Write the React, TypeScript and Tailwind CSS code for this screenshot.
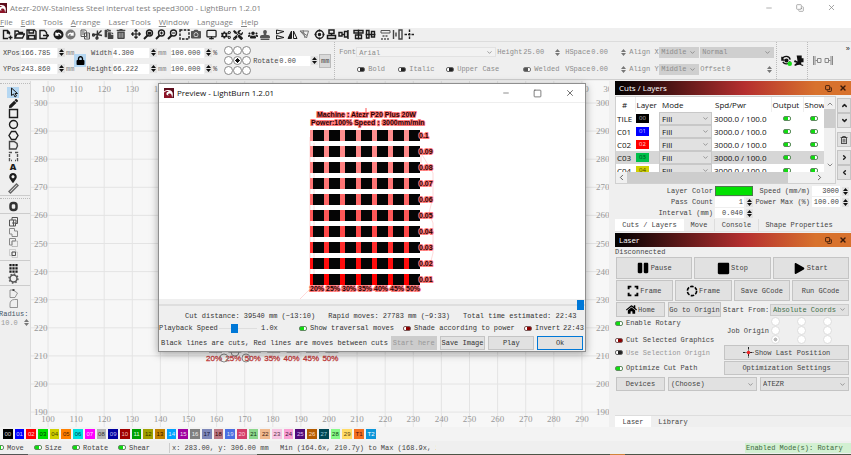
import type { ReactNode } from "react";
import { ChevronDown, ChevronLeft, ChevronRight, ChevronUp, Copy, Monitor, Minus, Square, X } from "lucide-react";
import {
  FaArrowsAlt, FaCamera, FaCogs, FaHome, FaLock, FaMapMarkerAlt, FaPaste, FaPause,
  FaPen, FaPlay, FaRegTrashAlt, FaStamp, FaStop, FaTools, FaTrashAlt, FaUsers,
} from "react-icons/fa";

const mono = "font-['Liberation_Mono',monospace] text-[7px] leading-[10px]";
const sans = "font-['Open_Sans',sans-serif]";

function Ico({ children, className = "size-[11px] text-[#1c1c1c]" }: { children: ReactNode; className?: string }) {
  return (
    <svg viewBox="0 0 22 22" className={`shrink-0 ${className}`} fill="none" stroke="currentColor" strokeWidth="2.8">
      {children}
    </svg>
  );
}

function Logo() {
  return (
    <svg viewBox="0 0 20 20" className="size-[10px] shrink-0">
      <rect width="20" height="20" fill="#8d1427" />
      <path d="M20 0v20h-5c2-5 1-9-3-9-3 0-4 3-2 5-4 0-6-3-5-6 1-4 7-6 12-2-3-5-10-6-17-3V0z" fill="#5b0d1c" />
      <path d="M0 7C6 3 14 3 17 9c1 3 1 7-1 11 0-5-1-9-5-9-3 0-4 3-1 4-4 1-6-2-5-5 1-2 3-3 6-3-4-2-8-1-11 2z" fill="#fff" />
    </svg>
  );
}

function Spin({ muted = false }: { muted?: boolean }) {
  return (
    <button aria-label="Step value" className={muted ? "shrink-0 text-[#777]" : "shrink-0 bg-[#e2e2e2] text-[#111]"}>
      <svg viewBox="0 0 7 9" className="block h-[9px] w-[7px]" fill="currentColor">
        <path d="M1 4 3.500 1 6 4zM1 5h5L3.500 8z" />
      </svg>
    </button>
  );
}

function Field({ label, value, labelClass = "", inputClass }: { label: string; value: string; labelClass?: string; inputClass: string }) {
  return (
    <label className="flex shrink-0 items-center">
      <span className={`whitespace-pre ${labelClass}`}>{label}</span>
      <input aria-label={label || "Scale"} defaultValue={value} className={`h-[10px] min-w-0 ${inputClass}`} />
    </label>
  );
}

const toggleStyles = {
  on: "border-[#5f8a5f] bg-[linear-gradient(90deg,#10dc10_60%,#ffffff_60%)]",
  off: "border-[#7a5a5a] bg-[linear-gradient(90deg,#ffffff_40%,#8d0000_40%)]",
  muted: "border-[#666] bg-[linear-gradient(90deg,#ffffff_40%,#222222_40%)]",
  mutedOn: "border-[#777] bg-[linear-gradient(90deg,#555555_60%,#ffffff_60%)]",
};

function Toggle({ label, kind = "on", className = "", hideLabel = false }: { label: string; kind?: keyof typeof toggleStyles; className?: string; hideLabel?: boolean }) {
  return (
    <label className={`flex shrink-0 items-center gap-[3px] whitespace-pre ${className}`}>
      <input
        type="checkbox"
        aria-label={label}
        defaultChecked={kind === "on" || kind === "mutedOn"}
        className={`h-[5px] w-2 shrink-0 appearance-none rounded-[2px] border ${toggleStyles[kind]}`}
      />
      {!hideLabel && label}
    </label>
  );
}

function Pick({ label, value, className = "", selectClass = "" }: { label: string; value: string; className?: string; selectClass?: string }) {
  return (
    <div className={`relative ${className}`}>
      <select aria-label={label} className={`block size-full appearance-none pl-[2px] ${selectClass}`}>
        <option>{value}</option>
      </select>
      <ChevronDown className="pointer-events-none absolute inset-y-0 right-[3px] my-auto size-[7px] text-[#666]" />
    </div>
  );
}

function PushButton({ children, className = "" }: { children: ReactNode; className?: string }) {
  return (
    <button className={`flex items-center justify-center whitespace-nowrap border border-[#c4c4c4] bg-[#e1e1e1] ${className}`}>
      {children}
    </button>
  );
}

function TitleBar() {
  return (
    <header className={`flex h-[15px] items-center bg-white text-[8px] text-[#808080] ${sans}`}>
      <div className="-ml-[3px]"><Logo /></div>
      <h1 className="ml-[3px] whitespace-nowrap">Atezr-20W-Stainless Steel interval test speed3000 - LightBurn 1.2.01</h1>
      <div className="ml-auto flex items-center gap-[23px] pr-[15px] text-[#888]">
        <button aria-label="Minimize"><Minus className="size-2" /></button>
        <button aria-label="Restore"><Copy className="size-2 -scale-x-100 rotate-90" /></button>
        <button aria-label="Close"><X className="size-[9px]" /></button>
      </div>
    </header>
  );
}

const menus = ["File", "Edit", "Tools", "Arrange", "Laser Tools", "Window", "Language", "Help"];

function MenuBar() {
  return (
    <nav className={`flex h-[13px] items-center gap-2 bg-white text-[8px] text-[#808080] ${sans}`}>
      {menus.map((m) => (
        <button key={m} className="whitespace-nowrap">
          {["Tools", "Laser Tools", "Language"].includes(m) ? m : <><u>{m[0]}</u>{m.slice(1)}</>}
        </button>
      ))}
    </nav>
  );
}

const fa = "size-[10px] shrink-0";

const toolGroups: ReactNode[][] = [
  [
    <Ico><path d="M12 19H3V3h8l4 4v4M11 3v5h4M17 13v8M13 17h8" /></Ico>,
    <Ico><path d="M2 18V4h6l2 3h7v3M2 18l4-8h15l-4 8z" /></Ico>,
    <Ico><path d="M2 2h15l3 3v15H2zM6 2v6h9V2M5 20v-7h12v7" /></Ico>,
    <Ico><path d="M17 10V7l-4-4H4v16h13v-2M10 13h10M17 10l4 3-4 4" /></Ico>,
  ],
  [
    <Ico><circle cx="11" cy="11" r="10" fill="currentColor" stroke="none" /><path d="M6 7v5h5M7 11c3-4 8-3 9 2" stroke="#fff" /></Ico>,
    <Ico className="size-[11px] text-[#777]"><circle cx="11" cy="11" r="10" fill="currentColor" stroke="none" /><path d="M16 7v5h-5M15 11c-3-4-8-3-9 2" stroke="#fff" /></Ico>,
  ],
  [
    <Ico className="size-[11px] text-[#555]"><path d="M2 2h9l2 3v10H2zM9 8h10v12H9zM4 6h5M4 10h4M12 12h5M12 16h5" strokeWidth="2" /></Ico>,
    <Ico className="size-[11px] text-[#333]"><path d="M1 11h10l8-8M11 11l9 2M11 3l-1 16" /><circle cx="10" cy="18" r="2" /><circle cx="3" cy="12" r="2" /></Ico>,
    <FaPaste className={`${fa} text-[#444]`} />,
    <FaTrashAlt className={`${fa} text-[#444]`} />,
  ],
  [
    <FaArrowsAlt className={fa} />,
    <Ico><circle cx="13" cy="8" r="6" /><path d="m9 13-7 7" strokeWidth="4" /><path d="M10 6h6v5h-6z" fill="currentColor" strokeWidth="1" /></Ico>,
    <Ico><circle cx="13" cy="8" r="6" /><path d="m9 13-7 7" strokeWidth="4" /><path d="M10 8h6M13 5v6" strokeWidth="2" /></Ico>,
    <Ico><circle cx="13" cy="8" r="6" /><path d="m9 13-7 7" strokeWidth="4" /><path d="M10 8h6" strokeWidth="2" /></Ico>,
    <Ico><path d="M2 2h18v18H2z" strokeDasharray="5 2.500" /></Ico>,
    <FaCamera className={`${fa} text-[#555]`} />,
  ],
  [<Monitor className="size-[11px] shrink-0" strokeWidth={2.600} />],
  [<FaCogs className={fa} />, <FaTools className={fa} />],
  [
    <FaUsers className={fa} />,
    <FaStamp className={`${fa} text-[#555]`} />,
  ],
  [
    <Ico><path d="M3 2v8l15-5zM3 20v-7l15 4z" strokeWidth="2" /></Ico>,
    <Ico><path d="M9 4v15H2z" fill="currentColor" strokeWidth="2" /><path d="M13 4v15h7z" strokeWidth="2" /></Ico>,
    <Ico className="size-[11px] text-[#777]"><path d="M2 4h17l-4 14zM2 4l14 9M8 2l4 16" strokeWidth="2" /></Ico>,
  ],
  [
    <Ico><circle cx="11" cy="11" r="8" /><circle cx="11" cy="11" r="2" fill="currentColor" /><path d="M11 1v4M11 17v4M1 11h4M17 11h4" /></Ico>,
    <Ico><path d="M6 2h10v7H6zM11 9v5M3 13h16v6H3z" strokeWidth="3" /></Ico>,
    <Ico><path d="M2 7h6v7H2zM8 11h5M13 5h6v11h-6zM20 2v18" /></Ico>,
  ],
  [
    <Ico><path d="M2 3h18v5H2zM5 12h12v7H5zM11 1v20" /></Ico>,
    <Ico><path d="M3 3h5v15H3zM13 5h6v11h-6zM1 11h20" /></Ico>,
  ],
  [
    <Ico className="size-[11px] text-[#555]"><path d="M2 3h18v5H2z" strokeWidth="2" /><path d="M5 14h12M2 20h18" strokeDasharray="4 2" /></Ico>,
    <Ico className="size-[11px] text-[#444]"><path d="M3 2v18M8 7v8M14 2h6v18h-6z" /></Ico>,
    <Ico className="size-[11px] text-[#222]"><path d="M11 1v20M1 11h20" strokeDasharray="5 2" /></Ico>,
  ],
];

function Toolbar() {
  return (
    <div className="flex h-[14px] items-center gap-[3px] border-b border-[#dcdcdc] bg-[#efefef] pl-px text-[#1c1c1c]">
      {toolGroups.map((group, i) => (
        <div key={i} className="flex">
          {group.map((icon, j) => (
            <button key={j} aria-label={`Tool ${i + 1}.${j + 1}`} className="flex w-3 justify-center">{icon}</button>
          ))}
        </div>
      ))}
    </div>
  );
}

function Anchor({ name, checked, className = "" }: { name: string; checked: boolean; className?: string }) {
  return (
    <input
      type="radio"
      name={name}
      aria-label={name}
      defaultChecked={checked}
      className={`block size-[9px] appearance-none rounded-full border bg-white ${className}`}
    />
  );
}

const nine = [0, 1, 2, 3, 4, 5, 6, 7, 8];

function PropertiesBar() {
  return (
    <div className={`flex h-[38px] shrink-0 items-center border-b border-[#cfcfcf] bg-[#efefef] text-[#4a4a4a] ${mono}`}>
      <div className="flex shrink-0 flex-col gap-[6px] pl-[3px]">
        <div className="flex items-center gap-px">
          <Field label="XPos" value="166.785" labelClass="w-[18px]" inputClass="w-[36px] bg-white" /><Spin />
          <span className="w-2 text-[#888]">mm</span>
        </div>
        <div className="flex items-center gap-px">
          <Field label="YPos" value="243.860" labelClass="w-[18px]" inputClass="w-[36px] bg-white" /><Spin />
          <span className="w-2 text-[#888]">mm</span>
        </div>
      </div>
      <button aria-label="Lock aspect ratio" className="flex h-[13px] w-[12px] shrink-0 items-center justify-center bg-[#b5d7f2] text-black">
        <FaLock className="size-[9px]" />
      </button>
      <div className="flex shrink-0 flex-col gap-[6px]">
        <div className="flex items-center gap-px">
          <Field label="Width" value="4.300" labelClass="w-[27px] pr-px text-right" inputClass="w-[36px] bg-white" /><Spin />
          <span className="w-3 text-[#888]">mm</span>
          <Field label="" value="100.000" inputClass="w-[33px] bg-white" /><Spin />
          <span>%</span>
        </div>
        <div className="flex items-center gap-px">
          <Field label="Height" value="66.222" labelClass="w-[27px] pr-px text-right" inputClass="w-[36px] bg-white" /><Spin />
          <span className="w-3 text-[#888]">mm</span>
          <Field label="" value="100.000" inputClass="w-[33px] bg-white" /><Spin />
          <span>%</span>
        </div>
      </div>
      <div className="ml-[7px] grid shrink-0 grid-cols-3 gap-y-px">
        {nine.map((n) => (
          <Anchor key={n} name="Anchor point" checked={n === 4} className="border-[#888] checked:bg-[radial-gradient(#111_40%,#fff_45%)]" />
        ))}
      </div>
      <div className="ml-[2px] flex shrink-0 items-center gap-px">
        <Field label="Rotate" value="0.00" labelClass="w-[26px]" inputClass="w-[31px] bg-white" /><Spin />
        <button className="h-[14px] w-[12px] border border-[#bbb] bg-[#d9d9d9]">mm</button>
      </div>
      <div className="ml-[3px] flex h-full shrink-0 flex-col justify-center gap-[6px] border-l border-dotted border-[#bbb] pl-[4px] text-[#8c8c8c]">
        <div className="flex items-center">
          <span className="w-[17px]">Font</span>
          <Pick label="Font" value="Arial" className="h-[10px] w-[140px]" selectClass="border border-[#e2e2e2] bg-[#f2f2f2]" />
          <Field label="Height" value="25.00" labelClass="ml-px w-[26px]" inputClass="w-[31px]" /><Spin muted />
          <Field label="HSpace" value="0.00" labelClass="ml-1 w-[26px]" inputClass="w-[29px]" /><Spin muted />
          <span className="ml-[2px] w-[30px]">Align X</span>
          <Pick label="Align X" value="Middle" className="h-[11px] w-[40px]" selectClass="bg-[#cfcfcf]" />
          <Pick label="Text mode" value="Normal" className="ml-px h-[11px] w-[74px]" selectClass="bg-[#cfcfcf]" />
        </div>
        <div className="flex items-center">
          <Toggle label="Bold" kind="muted" className="ml-[18px] w-[41px]" />
          <Toggle label="Italic" kind="muted" className="w-[48px]" />
          <Toggle label="Upper Case" kind="muted" className="w-[77px]" />
          <Toggle label="Welded" kind="mutedOn" className="w-[42px]" />
          <Field label="VSpace" value="0.00" labelClass="w-[26px]" inputClass="w-[29px]" /><Spin muted />
          <span className="ml-[2px] w-[30px]">Align Y</span>
          <Pick label="Align Y" value="Middle" className="h-[11px] w-[40px]" selectClass="bg-[#cfcfcf]" />
          <Field label="Offset" value="0" labelClass="ml-px w-[26px]" inputClass="w-[40px]" /><Spin muted />
        </div>
      </div>
      <div className="ml-[2px] flex h-full shrink-0 items-center gap-px border-l border-dotted border-[#bbb] pl-[4px]">
        <svg viewBox="0 0 24 24" className="size-[11px]" fill="none" stroke="#111" strokeWidth="3">
          <path d="M3 9c3-8 15-8 17 1M2 4v7h6M20 14c-3 6-12 8-16 1" /><circle cx="12" cy="12" r="3" fill="#111" />
          <circle cx="19" cy="19" r="5" fill="#15e015" stroke="none" />
        </svg>
        <svg viewBox="0 0 24 24" className="size-[11px]" fill="#111">
          <path d="M8 1h11v6h4v9h-5v4l5 2-2 2-6-3-5 1-6 2-1-3 5-4-6-2 2-4 6 3z" />
        </svg>
      </div>
      <div className="ml-[3px] flex h-full shrink-0 items-center border-l border-dotted border-[#bbb] pl-1 text-[#888]">
        <svg viewBox="0 0 44 22" className="h-[11px] w-[22px]" fill="none" stroke="currentColor" strokeWidth="2">
          <path d="M3 2v18M6 2v18M7 11h4M11 7h7v8h-7zM41 2v18M38 2v18M37 11h-3M26 7h7v8h-7z" />
        </svg>
      </div>
      <span className="ml-auto self-start pt-[2px] pr-px text-[#222]">»</span>
    </div>
  );
}

const drawTools: ReactNode[] = [
  <Ico><path d="M7 2v15l4-3 3 6 3-2-3-5h5z" strokeWidth="2" /></Ico>,
  <FaPen className="size-[9px]" />,
  <Ico><path d="M3 3h16v16H3z" /></Ico>,
  <Ico><circle cx="11" cy="11" r="8" /></Ico>,
  <Ico><path d="M7 3h8l5 8-5 8H7l-5-8z" /></Ico>,
  <Ico className="size-[11px] text-[#444]"><path d="M3 3h9l6 4 1 5-3 6H3z" /></Ico>,
  <Ico className="size-[11px] text-[#555]"><path d="M8 3H3v16h5M14 3h5v16h-5" strokeDasharray="6 2" /></Ico>,
  <span className="font-['Open_Sans',sans-serif] text-[9px] leading-[10px] font-extrabold">A</span>,
  <FaMapMarkerAlt className="size-[10px]" />,
  <Ico className="size-[11px] text-[#666]"><path d="M2 17 17 2l3 3L5 20z" /></Ico>,
];

const boolTools: ReactNode[] = [
  <Ico className="size-[11px] text-[#555]"><path d="M8 3h11v12h-4v5H3V8h5zM8 8h8v8M8 14h8M11 8v12" strokeWidth="2" /></Ico>,
  <Ico className="size-[11px] text-[#888]"><path d="M3 3h10v5h6v11H8v-5H3z" strokeWidth="2" /></Ico>,
  <Ico className="size-[11px] text-[#888]"><path d="M3 3h12v5H8v8H3z" strokeWidth="2" /><path d="M8 8h11v11H8z" strokeWidth="1" /></Ico>,
  <Ico className="size-[11px] text-[#aaa]"><path d="M3 3h12v12H3zM8 8h11v11H8z" strokeWidth="1" /><path d="M8 8h7v7H8z" stroke="#555" strokeWidth="2" /></Ico>,
];

function ToolColumn() {
  const cell = "flex min-h-0 w-[12px] flex-1 items-center justify-center";
  return (
    <aside className={`flex w-[31px] shrink-0 flex-col border-r border-[#dcdcdc] bg-[#efefef] text-[#1c1c1c] ${mono}`}>
      <div className="mt-[2px] border-t border-dotted border-[#bbb]" />
      <div className="mt-[3px] flex h-[107px] flex-col pl-[7px]">
        {drawTools.map((t, i) => (
          <button key={i} aria-label={`Draw tool ${i + 1}`} className={i === 0 ? `${cell} bg-[#b5d7f2]` : cell}>{t}</button>
        ))}
      </div>
      <div className="mt-px border-t border-[#ccc]" />
      <div className="mt-[2px] border-t border-dotted border-[#bbb]" />
      <button aria-label="Offset" className="mt-[2px] ml-[7px] flex h-[11px] w-[12px] items-center justify-center">
        <Ico className="size-[11px] text-[#333]"><rect x="5" y="4" width="12" height="14" rx="5" strokeWidth="5" /></Ico>
      </button>
      <div className="mt-px border-t border-[#ccc]" />
      <div className="mt-[2px] flex h-[43px] flex-col pl-[7px]">
        {boolTools.map((t, i) => <button key={i} aria-label={`Boolean ${i + 1}`} className={cell}>{t}</button>)}
      </div>
      <div className="mt-px border-t border-[#ccc]" />
      <div className="mt-[2px] flex h-[21px] flex-col pl-[7px]">
        <button aria-label="Grid array" className={cell}>
          <Ico><path d="M5 2v18M11 2v18M17 2v18" strokeWidth="4.500" strokeDasharray="4.500 2" /></Ico>
        </button>
        <button aria-label="Circular array" className={cell}>
          <Ico className="size-[11px] text-[#555]"><circle cx="11" cy="11" r="7" strokeWidth="3" /><circle cx="11" cy="11" r="9" strokeDasharray="3 4" /></Ico>
        </button>
      </div>
      <div className="mt-px border-t border-[#ccc]" />
      <div className="mt-[2px] flex h-[21px] flex-col pl-[7px]">
        <button aria-label="Start point" className={cell}>
          <Ico className="size-[11px] text-[#777]"><path d="M4 19V4h6l9 6-5 9z" strokeWidth="1.500" /><path d="M9 4h4" strokeWidth="3" stroke="#222" /></Ico>
        </button>
        <button aria-label="Fillet corner" className={cell}>
          <Ico className="size-[11px] text-[#777]"><path d="M4 19V12c0-5 3-9 9-9h6v16z" strokeWidth="1.500" /></Ico>
        </button>
      </div>
      <label htmlFor="radius" className="-ml-px h-[9px] whitespace-nowrap text-[#456]">Radius:</label>
      <div className="flex items-center gap-1 pl-px text-[#999]">
        <input id="radius" defaultValue="10.0" className="h-[9px] w-[20px] min-w-0" /><Spin muted />
      </div>
    </aside>
  );
}

const percents = ["20%", "25%", "50%", "35%", "40%", "45%", "50%"];

function Workspace() {
  const cols = Array.from({ length: 21 }, (_, i) => i);
  const rows = Array.from({ length: 12 }, (_, i) => i);
  // the top ruler runs under the preview window between these two columns
  const topLabels = [0, 1, 2, 3, 4, 19, 20];
  return (
    <div className="relative min-w-0 flex-1 bg-[#f7f7f7]">
      <svg className="absolute inset-0 size-full font-['Liberation_Serif',serif] text-[9px]" fill="#999">
        <g stroke="#e4e4e4">
          {cols.map((i) => <line key={i} x1={17 + i * 28.100} x2={17 + i * 28.100} y1="0" y2="100%" />)}
          {rows.map((i) => <line key={i} x1="0" x2="100%" y1={22 + i * 28.100} y2={22 + i * 28.100} />)}
        </g>
        <g textAnchor="middle">
          {topLabels.map((i) => <text key={i} x={17 + i * 28.100} y="11">{100 + i * 10}</text>)}
          {cols.slice(0, 20).map((i) => <text key={i} x={17 + i * 28.100} y="341">{100 + i * 10}</text>)}
        </g>
        {rows.map((i) => (
          <g key={i}>
            <text x="3" y={25 + i * 28.100}>{300 - i * 10}</text>
            <text x="565" y={25 + i * 28.100}>{300 - i * 10}</text>
          </g>
        ))}
        <g className="font-['Liberation_Sans',sans-serif] text-[8px]" fill="#c23b3b" stroke="#c23b3b" strokeWidth="0.300">
          {percents.map((p, i) => <text key={i} x={175 + i * 19.400} y="280">{p}</text>)}
        </g>
        <g fill="none" stroke="#777">
          {percents.map((p, i) => <path key={i} d={`M${178 + i * 19.400} 271h13`} />)}
          <circle cx="193" cy="277" r="4" stroke="#888" />
          <circle cx="204" cy="271" r="4" stroke="#888" />
          <circle cx="215" cy="277" r="4" stroke="#888" />
        </g>
      </svg>
    </div>
  );
}

const passes = [
  ["0.1", "#ff8d8d"], ["0.09", "#ff8888"], ["0.08", "#ff8080"], ["0.07", "#ff7474"], ["0.06", "#ff6666"],
  ["0.05", "#ff5858"], ["0.04", "#ff4848"], ["0.03", "#ff2c2c"], ["0.02", "#ff0c0c"], ["0.01", "#ff0000"],
];
const powers = ["20%", "25%", "30%", "35%", "40%", "45%", "50%"];

function CutPlot() {
  return (
    <svg className="block h-[196px] w-full font-['Liberation_Sans',sans-serif] text-[7px]">
      <g fill="none" stroke="#ffc9c9">
        <path d="M141 196l10-10V34l95 2M155 172V40M262 60V50l12 20v24l-4 16 4 10v30l-3 12" strokeWidth="0.700" />
      </g>
      <path d="M207 5v9" stroke="#ff5555" />
      {passes.map(([label, color], r) => (
        <g key={label}>
          <rect x="151" y={27 + r * 16} width="109" height="11" fill={color} />
          {powers.map((p, c) => <rect key={c} x={154 + c * 16} y={27 + r * 16} width="11" height="11" fill="#050505" />)}
        </g>
      ))}
      <g fill="#2a0000" stroke="#ff7878" strokeWidth="2.200" strokeLinejoin="round" className="font-bold" paintOrder="stroke">
        <text x="158" y="14">Machine : Atezr P20 Plus 20W</text>
        <text x="152" y="22">Power:100% Speed：3000mm/min</text>
        {passes.map(([label], r) => <text key={label} x="260" y={35 + r * 16}>{label}</text>)}
        {powers.map((p, c) => <text key={c} x={151 + c * 16} y="188">{p}</text>)}
      </g>
    </svg>
  );
}

function PreviewDialog() {
  return (
    <section role="dialog" aria-label="Preview" className="absolute top-[83px] left-[158px] flex w-[428px] flex-col border border-[#8f8f8f] bg-[#efefef] shadow-[0_2px_8px_rgba(0,0,0,0.35)]">
      <div className={`flex h-[19px] items-center border-b border-[#eee] bg-white px-[5px] text-[8px] text-[#111] ${sans}`}>
        <Logo />
        <h2 className="ml-[3px]">Preview - LightBurn 1.2.01</h2>
        <div className="ml-auto flex items-center gap-[23px] pr-[5px] text-[#555]">
          <button aria-label="Minimize preview"><Minus className="size-2" /></button>
          <button aria-label="Maximize preview"><Square className="size-[9px]" /></button>
          <button aria-label="Close preview"><X className="size-[10px]" /></button>
        </div>
      </div>
      <div className="bg-white"><CutPlot /></div>
      <input
        type="range"
        aria-label="Playback position"
        defaultValue="100"
        className="mt-px h-[10px] w-full appearance-none bg-[linear-gradient(#dedede,#dedede)] bg-[length:100%_2px] bg-center bg-no-repeat pr-px [&::-webkit-slider-thumb]:h-[10px] [&::-webkit-slider-thumb]:w-[7px] [&::-webkit-slider-thumb]:appearance-none [&::-webkit-slider-thumb]:bg-[#0078d7]"
      />
      <div className={`flex flex-col text-[#333] ${mono}`}>
        <div className="flex h-[12px] items-center gap-[13px] pl-[26px] whitespace-nowrap">
          <span>Cut distance: 39540 mm (~13:10)</span>
          <span>Rapid moves: 27783 mm (~9:33)</span>
          <span>Total time estimated: 22:43</span>
        </div>
        <div className="flex h-[12px] items-center whitespace-nowrap">
          <label htmlFor="speed" className="w-[60px]">Playback Speed</label>
          <input
            id="speed"
            type="range"
            defaultValue="38"
            className="h-[9px] w-[38px] appearance-none bg-[linear-gradient(#dedede,#dedede)] bg-[length:100%_1px] bg-center bg-no-repeat [&::-webkit-slider-thumb]:h-[9px] [&::-webkit-slider-thumb]:w-[7px] [&::-webkit-slider-thumb]:appearance-none [&::-webkit-slider-thumb]:bg-[#0078d7]"
          />
          <output className="ml-1 w-[38px]">1.0x</output>
          <Toggle label="Show traversal moves" className="w-[104px]" />
          <Toggle label="Shade according to power" kind="off" className="w-[121px]" />
          <Toggle label="Invert" kind="off" />
          <span className="ml-auto pr-px">22:43</span>
        </div>
        <div className="flex h-[17px] items-center gap-[3px] pr-[2px] pl-[2px] whitespace-nowrap">
          <span>Black lines are cuts, Red lines are moves between cuts</span>
          <button disabled className="h-[14px] w-[46px] flex-auto bg-[#cccccc] text-[#999]">Start here</button>
          <PushButton className="h-[14px] w-[46px] flex-auto">Save Image</PushButton>
          <PushButton className="h-[14px] w-[46px] flex-auto">Play</PushButton>
          <button className="h-[14px] w-[46px] flex-auto border border-[#0078d7] bg-[#e1e1e1]">Ok</button>
        </div>
      </div>
    </section>
  );
}

function PanelHeader({ title }: { title: string }) {
  return (
    <div className={`flex h-[14px] shrink-0 items-center bg-[linear-gradient(90deg,#000_0%,#b52f2f_55%,#d8722d_85%,#d8722d_100%)] px-1 text-white ${sans}`}>
      <h2 className="text-[8px]">{title}</h2>
      <div className="ml-auto flex items-center gap-[7px] text-[#3a1a0a]">
        <button aria-label={`Float ${title}`}><Copy className="size-[7px] -scale-x-100 rotate-90" strokeWidth={3} /></button>
        <button aria-label={`Close ${title}`}><X className="size-[8px]" strokeWidth={4} /></button>
      </div>
    </div>
  );
}

const layers = [
  { name: "TILE", num: "00", chip: "bg-black text-[#bbb]", row: "" },
  { name: "C01", num: "01", chip: "bg-[#0000ff] text-[#ccf]", row: "" },
  { name: "C02", num: "02", chip: "bg-[#ff0000] text-[#fdd]", row: "" },
  { name: "C03", num: "03", chip: "bg-[#00c04a] text-[#042]", row: "bg-[#d6d6d6]" },
  { name: "C04", num: "04", chip: "bg-[#d0d000] text-[#440]", row: "" },
];

function LayerList() {
  const side = "flex h-[15px] items-center justify-center border border-[#c4c4c4] bg-[#e1e1e1] text-[#222]";
  return (
    <div className="mt-px flex gap-px">
      <div className="min-w-0 flex-1 border border-[#d0d0d0] bg-white">
        <div className="flex h-[75px]">
          <div className="min-w-0 flex-1 overflow-hidden">
            <table className={`w-[208px] table-fixed border-collapse text-left text-[8px] leading-[13px] text-[#111] ${sans}`}>
              <colgroup>
                <col className="w-[19px]" /><col className="w-[24px]" /><col className="w-[54px]" />
                <col className="w-[58px]" /><col className="w-[32px]" /><col className="w-[21px]" />
              </colgroup>
              <thead>
                <tr className="h-[15px] whitespace-nowrap">
                  <th className="pl-[6px] font-normal">#</th>
                  <th className="border-l border-[#eee] pl-px font-normal">Layer</th>
                  <th className="pl-[3px] font-normal">Mode</th>
                  <th className="pl-[2px] font-normal">Spd/Pwr</th>
                  <th className="border-l border-[#eee] pl-px font-normal">Output</th>
                  <th className="overflow-hidden border-l border-[#eee] pl-px font-normal">Show</th>
                </tr>
              </thead>
              <tbody>
                {layers.map((l) => (
                  <tr key={l.name} className={`h-[13px] whitespace-nowrap ${l.row}`}>
                    <td className="pl-px">{l.name}</td>
                    <td><span className={`ml-px block h-[9px] w-[13px] text-center text-[6px] leading-[9px] ${l.chip}`}>{l.num}</span></td>
                    <td><Pick label={`Mode ${l.name}`} value="Fill" className="mr-px h-[13px]" selectClass="border border-[#c8c8c8] bg-[#e1e1e1] leading-[11px]" /></td>
                    <td className="pl-px">3000.0 / 100.0</td>
                    <td><Toggle label={`Output ${l.name}`} hideLabel className="justify-center" /></td>
                    <td><Toggle label={`Show ${l.name}`} hideLabel className="justify-center" /></td>
                  </tr>
                ))}
              </tbody>
            </table>
          </div>
          <div className="flex w-[11px] flex-col items-center justify-between bg-[#f0f0f0] py-[3px]">
            <ChevronUp className="size-2 text-[#555]" />
            <div className="mt-px mb-auto h-[19px] w-full bg-[#cdcdcd]" />
            <ChevronDown className="size-2 text-[#555]" />
          </div>
        </div>
        <div className="flex h-[11px] items-center bg-[#f0f0f0] pr-[11px] text-[#333]">
          <ChevronLeft className="mx-px size-[9px]" />
          <div className="h-full w-[161px] bg-[#cdcdcd]" />
          <ChevronRight className="ml-auto size-[9px]" />
        </div>
      </div>
      <div className="flex w-[14px] flex-col">
        <button aria-label="Move layer up" className={`${side} mt-[2px]`}><ChevronUp className="size-[7px]" strokeWidth={5} /></button>
        <button aria-label="Move layer down" className={side}><ChevronDown className="size-[7px]" strokeWidth={5} /></button>
        <button aria-label="Delete layer" className={`${side} mt-[4px]`}><FaRegTrashAlt className="size-2" /></button>
        <button aria-label="Next" className={`${side} mt-[3px]`}><ChevronRight className="size-[7px]" strokeWidth={5} /></button>
        <button aria-label="Previous" className={side}><ChevronLeft className="size-[7px]" strokeWidth={5} /></button>
      </div>
    </div>
  );
}

function Param({ label, value, inputClass }: { label: string; value: string; inputClass: string }) {
  return (
    <div className="flex items-center justify-end gap-[2px]">
      <Field label={label} value={value} labelClass="pr-[2px]" inputClass={`bg-white pr-px text-right ${inputClass}`} />
      <Spin />
    </div>
  );
}

function CutsPanel() {
  return (
    <section>
      <PanelHeader title="Cuts / Layers" />
      <LayerList />
      <div className="mt-px flex">
        <div className="flex w-[138px] flex-col gap-px pt-px">
          <div className="flex items-center justify-end">
            <span className="pr-[2px]">Layer Color</span>
            <button aria-label="Layer Color" className="h-[10px] w-[38px] border border-[#4a7a4a] bg-[#00e000]" />
          </div>
          <Param label="Pass Count" value="1" inputClass="w-[29px]" />
          <Param label="Interval (mm)" value="0.040" inputClass="w-[29px]" />
        </div>
        <div className="flex flex-1 flex-col gap-px pt-px pr-[2px]">
          <Param label="Speed (mm/m)" value="3000" inputClass="w-[28px]" />
          <Param label="Power Max (%)" value="100.00" inputClass="w-[28px]" />
        </div>
      </div>
      <div role="tablist" className="mt-px flex h-[13px] items-center border-b border-[#e2e2e2]">
        <button role="tab" className="h-full w-[69px] bg-white">Cuts / Layers</button>
        <button role="tab" className="h-full w-[31px] border-r border-[#ddd]">Move</button>
        <button role="tab" className="h-full w-[44px] border-r border-[#ddd]">Console</button>
        <button role="tab" className="h-full w-[80px]">Shape Properties</button>
      </div>
    </section>
  );
}

function LaserPanel() {
  return (
    <section className="mt-px">
      <PanelHeader title="Laser" />
      <p>Disconnected</p>
      <div className="flex flex-col gap-px pr-[2px] pl-px">
        <div className="grid grid-cols-3 gap-[2px]">
          <PushButton className="h-[22px] gap-[2px]"><FaPause className="size-[12px] text-black" />Pause</PushButton>
          <PushButton className="h-[22px] gap-px"><FaStop className="size-[13px] text-black" />Stop</PushButton>
          <PushButton className="h-[22px] gap-[2px]"><FaPlay className="size-[11px] text-black" />Start</PushButton>
        </div>
        <div className="grid grid-cols-4 gap-[2px]">
          <PushButton className="h-[21px] gap-px">
            <Ico className="size-[12px] text-black"><path d="M8 3H3v5M14 3h5v5M8 19H3v-5M14 19h5v-5" strokeWidth="3.500" /></Ico>Frame
          </PushButton>
          <PushButton className="h-[21px] gap-px">
            <Ico className="size-[12px] text-black"><circle cx="11" cy="11" r="8.500" strokeWidth="3" strokeDasharray="6.500 2.400" /></Ico>Frame
          </PushButton>
          <PushButton className="h-[21px]">Save GCode</PushButton>
          <PushButton className="h-[21px]">Run GCode</PushButton>
        </div>
        <div className="flex h-[15px] items-center">
          <PushButton className="h-[15px] w-[49px] gap-px"><FaHome className="size-[11px] text-black" />Home</PushButton>
          <PushButton className="ml-[3px] h-[15px] w-[53px]">Go to Origin</PushButton>
          <span className="w-[49px] pl-[2px] whitespace-nowrap">Start From:</span>
          <Pick label="Start From" value="Absolute Coords" className="h-[12px] flex-1" selectClass="bg-[#e1e1e1] border border-[#ccc] text-[#3c6e47]" />
        </div>
      </div>
      <div className="flex pr-[2px]">
        <div className="flex w-[109px] flex-col">
          <Toggle label="Enable Rotary" className="h-[12px]" />
          <Toggle label="Cut Selected Graphics" kind="off" className="mt-[5px] h-[12px]" />
          <Toggle label="Use Selection Origin" kind="muted" className="h-[13px] text-[#999]" />
          <Toggle label="Optimize Cut Path" className="mt-[2px] h-[14px]" />
        </div>
        <div className="flex flex-1 flex-col gap-px">
          <div className="flex items-center">
            <span className="w-[47px] pl-[3px] whitespace-nowrap">Job Origin</span>
            <div className="grid flex-1 grid-cols-3">
              {nine.map((n) => (
                <Anchor key={n} name="Job origin" checked={n === 6} className="border-[#ddd] checked:bg-[radial-gradient(#bbb_35%,#fff_45%)]" />
              ))}
            </div>
          </div>
          <PushButton className="h-[15px] gap-px">
            <svg viewBox="0 0 22 22" className="size-[11px]" stroke="#222" strokeWidth="2">
              <path d="M11 0v22M0 11h22" strokeDasharray="5 2" /><circle cx="11" cy="11" r="3.500" fill="#e22" stroke="none" />
            </svg>
            Show Last Position
          </PushButton>
          <PushButton className="h-[14px]">Optimization Settings</PushButton>
        </div>
      </div>
      <div className="mt-[2px] flex h-[14px] gap-[3px] pr-[2px] pl-px">
        <PushButton className="w-[49px]">Devices</PushButton>
        <Pick label="Device" value="(Choose)" className="flex-1" selectClass="border border-[#c4c4c4] bg-[#e1e1e1]" />
        <Pick label="Profile" value="ATEZR" className="flex-1" selectClass="border border-[#c4c4c4] bg-[#e1e1e1]" />
      </div>
    </section>
  );
}

const swatches = [
  "bg-[#000000] text-[#ccc]", "bg-[#0000ff] text-[#ccf]", "bg-[#ff0000] text-[#fdd]", "bg-[#00e000] text-[#030]",
  "bg-[#d0d000] text-[#440]", "bg-[#ff8000] text-[#520]", "bg-[#00e0e0] text-[#044]", "bg-[#ff00ff] text-[#fdf]",
  "bg-[#b4b4b4] text-[#333]", "bg-[#0000a0] text-[#bbe]", "bg-[#a00000] text-[#ebb]", "bg-[#00a000] text-[#dfd]",
  "bg-[#a0a000] text-[#330]", "bg-[#c08000] text-[#310]", "bg-[#00a0ff] text-[#def]", "bg-[#a000a0] text-[#ede]",
  "bg-[#808080] text-[#eee]", "bg-[#7d87b9] text-[#113]", "bg-[#bb7784] text-[#300]", "bg-[#4a6fe3] text-[#dde]",
  "bg-[#d33f6a] text-[#fcd]", "bg-[#8cd78c] text-[#131]", "bg-[#f0b98d] text-[#421]", "bg-[#f6c4e1] text-[#534]",
  "bg-[#fa9ed4] text-[#413]", "bg-[#500a78] text-[#dbe]", "bg-[#b45a00] text-[#fdb]", "bg-[#004754] text-[#9cd]",
  "bg-[#86fa88] text-[#141]", "bg-[#ffdb66] text-[#541]",
];

function Palette() {
  const chip = "mx-px h-[10px] text-center font-['Liberation_Sans',sans-serif] text-[6px] leading-[10px]";
  return (
    <div className="flex h-[14px] shrink-0 items-center bg-[#f3f3f3] pl-[2px]">
      <div className="grid w-[351px] grid-cols-30">
        {swatches.map((s, i) => (
          <button key={s} className={`${chip} ${s}`}>{String(i).padStart(2, "0")}</button>
        ))}
      </div>
      <button className={`${chip} w-[10px] bg-[#f36f21] text-[#511]`}>T1</button>
      <button className={`${chip} w-[10px] bg-[#0c96d9] text-white`}>T2</button>
    </div>
  );
}

function StatusBar() {
  return (
    <footer className="flex h-[13px] shrink-0 items-center overflow-hidden bg-[#efefef] whitespace-nowrap text-[#444]">
      <Toggle label="Move" className="-ml-1 w-[38px]" />
      <Toggle label="Size" className="w-[38px]" />
      <Toggle label="Rotate" className="w-[46px]" />
      <Toggle label="Shear" className="w-[51px]" />
      <span className="w-[111px] border-l border-[#ccc] pl-[2px]">x: 283.00, y: 306.00 mm</span>
      <span className="w-[156px] overflow-hidden">Min (164.6x, 210.7y) to Max (168.9x, 2</span>
      <span className="ml-auto w-[106px] bg-[#d2f0d2] pl-px text-[#3f6a3f]">Enabled Mode(s): Rotary</span>
    </footer>
  );
}

export default function App() {
  return (
    <div className="relative flex min-h-screen w-full flex-col overflow-hidden bg-[#efefef]">
      <TitleBar />
      <MenuBar />
      <Toolbar />
      <PropertiesBar />
      <main className="mt-px flex min-h-[345px] flex-1">
        <ToolColumn />
        <Workspace />
        <div className={`ml-[6px] flex w-[236px] shrink-0 flex-col text-[#444] ${mono}`}>
          <CutsPanel />
          <LaserPanel />
          <div role="tablist" className="mt-auto flex h-[12px] border-t border-[#ddd]">
            <button role="tab" className="w-[36px] bg-white">Laser</button>
            <button role="tab" className="w-[44px]">Library</button>
          </div>
        </div>
      </main>
      <Palette />
      <div className={mono}><StatusBar /></div>
      <div className="flex h-px shrink-0">
        <div className="w-[28px] bg-[#555]" />
        <div className="w-[229px] bg-[#bbb]" />
        <div className="flex-1 bg-[#4d5546]" />
        <div className="w-[15px] bg-[#d0843a]" />
        <div className="w-[226px] bg-[#4d5546]" />
      </div>
      <PreviewDialog />
    </div>
  );
}
